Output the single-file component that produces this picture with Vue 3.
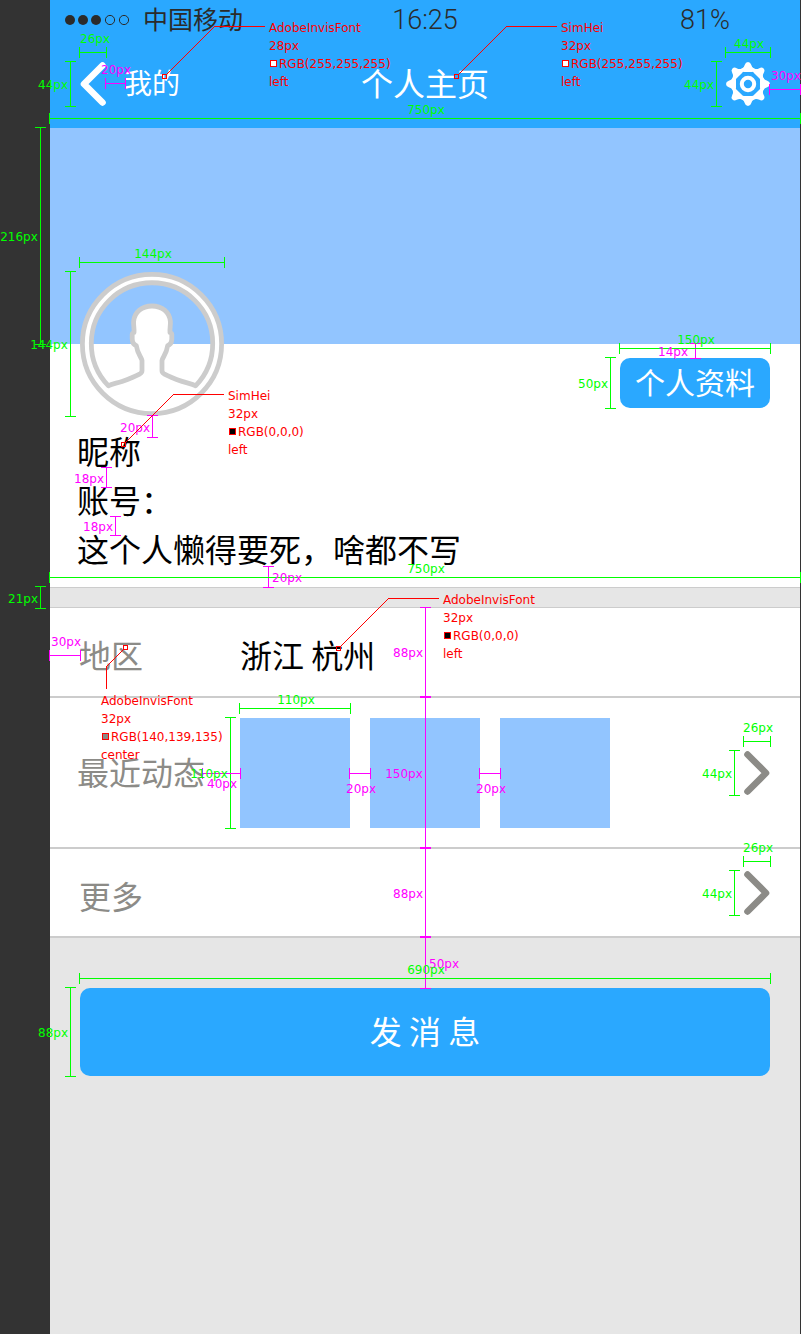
<script setup>
const GREEN = 'green'
const PINK = 'pink'

const photos = [1, 2, 3]
const teeth = [0, 45, 90, 135, 180, 225, 270, 315]

// Horizontal rulers: x1..x2 at height y
const horizontal = [
  { c: GREEN, x1: 79, x2: 106, y: 52 },
  { c: PINK, x1: 105, x2: 125, y: 83 },
  { c: GREEN, x1: 49, x2: 800, y: 118 },
  { c: GREEN, x1: 725, x2: 770, y: 52 },
  { c: PINK, x1: 769, x2: 800, y: 89 },
  { c: GREEN, x1: 79, x2: 224, y: 262 },
  { c: GREEN, x1: 619, x2: 770, y: 348 },
  { c: GREEN, x1: 49, x2: 800, y: 577 },
  { c: PINK, x1: 49, x2: 80, y: 655 },
  { c: PINK, x1: 202, x2: 240, y: 773 },
  { c: GREEN, x1: 239, x2: 350, y: 708 },
  { c: PINK, x1: 349, x2: 370, y: 773 },
  { c: PINK, x1: 479, x2: 500, y: 773 },
  { c: GREEN, x1: 743, x2: 770, y: 741 },
  { c: GREEN, x1: 743, x2: 770, y: 861 },
  { c: GREEN, x1: 79, x2: 770, y: 978 },
]

// Vertical rulers: y1..y2 at position x
const vertical = [
  { c: GREEN, x: 70, y1: 61, y2: 106 },
  { c: GREEN, x: 40, y1: 127, y2: 344 },
  { c: GREEN, x: 716, y1: 61, y2: 106 },
  { c: GREEN, x: 70, y1: 271, y2: 416 },
  { c: PINK, x: 152, y1: 415, y2: 437 },
  { c: PINK, x: 695, y1: 343, y2: 358 },
  { c: GREEN, x: 610, y1: 357, y2: 408 },
  { c: PINK, x: 106, y1: 467, y2: 487 },
  { c: PINK, x: 115, y1: 516, y2: 535 },
  { c: PINK, x: 268, y1: 566, y2: 587 },
  { c: GREEN, x: 40, y1: 586, y2: 608 },
  { c: PINK, x: 425, y1: 607, y2: 697 },
  { c: PINK, x: 425, y1: 696, y2: 848 },
  { c: PINK, x: 425, y1: 847, y2: 937 },
  { c: PINK, x: 425, y1: 936, y2: 988 },
  { c: GREEN, x: 230, y1: 717, y2: 828 },
  { c: GREEN, x: 734, y1: 750, y2: 795 },
  { c: GREEN, x: 734, y1: 870, y2: 915 },
  { c: GREEN, x: 70, y1: 987, y2: 1076 },
]

const labels = [
  { c: GREEN, x: 95, y: 43, t: '26px' },
  { c: PINK, x: 116, y: 74, t: '20px' },
  { c: GREEN, x: 53, y: 89, t: '44px' },
  { c: GREEN, x: 426, y: 114, t: '750px' },
  { c: GREEN, x: 749, y: 48, t: '44px' },
  { c: GREEN, x: 699, y: 89, t: '44px' },
  { c: PINK, x: 786, y: 80, t: '30px' },
  { c: GREEN, x: 19, y: 241, t: '216px' },
  { c: GREEN, x: 153, y: 258, t: '144px' },
  { c: GREEN, x: 49, y: 349, t: '144px' },
  { c: PINK, x: 135, y: 432, t: '20px' },
  { c: GREEN, x: 696, y: 344, t: '150px' },
  { c: PINK, x: 673, y: 356, t: '14px' },
  { c: GREEN, x: 593, y: 388, t: '50px' },
  { c: PINK, x: 89, y: 483, t: '18px' },
  { c: PINK, x: 98, y: 531, t: '18px' },
  { c: PINK, x: 287, y: 582, t: '20px' },
  { c: GREEN, x: 426, y: 573, t: '750px' },
  { c: GREEN, x: 23, y: 603, t: '21px' },
  { c: PINK, x: 408, y: 657, t: '88px' },
  { c: PINK, x: 66, y: 646, t: '30px' },
  { c: GREEN, x: 209, y: 778, t: '110px' },
  { c: PINK, x: 222, y: 788, t: '40px' },
  { c: GREEN, x: 296, y: 704, t: '110px' },
  { c: PINK, x: 404, y: 778, t: '150px' },
  { c: PINK, x: 361, y: 793, t: '20px' },
  { c: PINK, x: 491, y: 793, t: '20px' },
  { c: GREEN, x: 758, y: 732, t: '26px' },
  { c: GREEN, x: 717, y: 778, t: '44px' },
  { c: GREEN, x: 758, y: 852, t: '26px' },
  { c: GREEN, x: 717, y: 898, t: '44px' },
  { c: PINK, x: 408, y: 898, t: '88px' },
  { c: PINK, x: 444, y: 968, t: '50px' },
  { c: GREEN, x: 426, y: 974, t: '690px' },
  { c: GREEN, x: 53, y: 1037, t: '88px' },
]

// Font call-outs: marker position, leader line and the text block
const notes = [
  { mx: 162, my: 74, diag: 'M167 74L215 26', line: 'M215 26.5H265', x: 269, y: 32, font: 'AdobeInvisFont', size: '28px', rgb: '255,255,255', align: 'left' },
  { mx: 454, my: 74, diag: 'M459 74L507 26', line: 'M506 26.5H557', x: 561, y: 32, font: 'SimHei', size: '32px', rgb: '255,255,255', align: 'left' },
  { mx: 121, my: 442, diag: 'M126 442L174 394', line: 'M173 394.5H224', x: 228, y: 400, font: 'SimHei', size: '32px', rgb: '0,0,0', align: 'left' },
  { mx: 336, my: 646, diag: 'M341 646L389 598', line: 'M388 598.5H439', x: 443, y: 604, font: 'AdobeInvisFont', size: '32px', rgb: '0,0,0', align: 'left' },
  { mx: 123, my: 645, diag: 'M124 649L106 667', line: 'M106.5 666V689', x: 101, y: 705, font: 'AdobeInvisFont', size: '32px', rgb: '140,139,135', align: 'center' },
]

const hPath = (d) => `M${d.x1} ${d.y + 0.5}H${d.x2 + 1}M${d.x1 + 0.5} ${d.y - 5}v11M${d.x2 + 0.5} ${d.y - 5}v11`
const vPath = (d) => `M${d.x + 0.5} ${d.y1}V${d.y2 + 1}M${d.x - 5} ${d.y1 + 0.5}h11M${d.x - 5} ${d.y2 + 0.5}h11`
</script>

<template>
  <div class="board">
    <main class="screen">
      <header class="top">
        <div class="status">
          <div class="carrier">
            <svg width="66" height="12" viewBox="0 0 66 12" aria-hidden="true">
              <g fill="#2b2b2b">
                <circle cx="6" cy="6" r="5" />
                <circle cx="19" cy="6" r="5" />
                <circle cx="32" cy="6" r="5" />
              </g>
              <g fill="none" stroke="#2b2b2b">
                <circle cx="46" cy="6" r="4.6" />
                <circle cx="60" cy="6" r="4.6" />
              </g>
            </svg>
            <span class="carrier-name">中国移动</span>
          </div>
          <span class="digits">16:25</span>
          <span class="digits battery">81%</span>
        </div>
        <nav class="nav">
          <a class="back" href="#">
            <svg width="26" height="44" viewBox="0 0 26 44" aria-hidden="true">
              <path d="M22.5 3.5L4 22L22.5 40.5" fill="none" stroke="#fff" stroke-width="6.6" stroke-linecap="round" stroke-linejoin="round" />
            </svg>
            <span class="back-text">我的</span>
          </a>
          <h1 class="title">个人主页</h1>
          <button class="settings" type="button" aria-label="设置">
            <svg width="44" height="44" viewBox="0 0 44 44" aria-hidden="true">
              <path
                v-for="a in teeth"
                :key="a"
                d="M16 6.600Q18.200 5.400 18.800 2.800Q19.600 0 22 0Q24.400 0 25.200 2.800Q25.800 5.400 28 6.600L26 10H18Z"
                :transform="`rotate(${a} 22 22)`"
                fill="#fff"
              />
              <circle cx="22" cy="22" r="14.8" fill="none" stroke="#fff" stroke-width="3.800" />
              <circle cx="22" cy="22" r="6.2" fill="none" stroke="#fff" stroke-width="4" />
            </svg>
          </button>
        </nav>
      </header>

      <div class="cover"></div>

      <section class="profile">
        <div class="profile-head">
          <svg class="avatar" width="144" height="144" viewBox="0 0 144 144" role="img" aria-label="头像">
            <circle cx="72" cy="72" r="65" fill="none" stroke="#fff" stroke-width="8" />
            <circle cx="72" cy="72" r="69.6" fill="none" stroke="#ccc" stroke-width="4.8" />
            <path
              d="M28.5 113.8C32 111.4 36 111.4 42 109.4C50 106.6 56 104 60 101.8Q62 100.6 62 98.5V88.5C61 84.5 57.5 82 56.3 73.5Q52.5 72.5 52.2 67V62.5Q52.2 61 54 60.5C54.3 56 53.4 54 53.6 49.5C54.5 40 62 34 72 34C82 34 89.5 40 90.4 49.5C90.6 54 89.7 56 90 60.5Q91.8 61 91.8 62.5V67Q91.5 72.5 87.7 73.5C86.5 82 83 84.5 82 88.5V98.5Q82 100.6 84 101.8C88 104 94 106.6 102 109.4C108 111.4 112 111.4 115.5 113.8"
              fill="#fff"
            />
            <path
              d="M28.5 113.8A60.7 60.7 0 1 1 115.5 113.8C112 111.4 108 111.4 102 109.4C94 106.6 88 104 84 101.8Q82 100.6 82 98.5V88.5C83 84.5 86.5 82 87.7 73.5Q91.5 72.5 91.8 67V62.5Q91.8 61 90 60.5C89.7 56 90.6 54 90.4 49.5C89.5 40 82 34 72 34C62 34 54.5 40 53.6 49.5C53.4 54 54.3 56 54 60.5Q52.2 61 52.2 62.5V67Q52.5 72.5 56.3 73.5C57.5 82 61 84.5 62 88.5V98.5Q62 100.6 60 101.8C56 104 50 106.6 42 109.4C36 111.4 32 111.4 28.5 113.8Z"
              fill="none"
              stroke="#ccc"
              stroke-width="4.8"
              stroke-linejoin="round"
            />
          </svg>
          <button class="info-button" type="button">个人资料</button>
        </div>
        <div class="bio">
          <p>昵称</p>
          <p>账号：</p>
          <p>这个人懒得要死，啥都不写</p>
        </div>
      </section>

      <section class="list">
        <div class="row low">
          <span class="label">地区</span>
          <span class="value">浙江 杭州</span>
        </div>
        <a class="row" href="#">
          <span class="label">最近动态</span>
          <span class="photos">
            <span v-for="p in photos" :key="p" class="photo"></span>
          </span>
          <svg class="more" width="26" height="44" viewBox="0 0 26 44" aria-hidden="true">
            <path d="M3.5 3.5L22 22L3.5 40.5" />
          </svg>
        </a>
        <a class="row low" href="#">
          <span class="label">更多</span>
          <svg class="more" width="26" height="44" viewBox="0 0 26 44" aria-hidden="true">
            <path d="M3.5 3.5L22 22L3.5 40.5" />
          </svg>
        </a>
      </section>

      <div class="actions">
        <button class="send" type="button">发 消 息</button>
      </div>
    </main>

    <svg class="marks" viewBox="0 0 801 1334">
      <g class="rulers">
        <path v-for="(d, i) in vertical" :key="'v' + i" :class="d.c" :d="vPath(d)" />
        <path v-for="(d, i) in horizontal" :key="'h' + i" :class="d.c" :d="hPath(d)" />
      </g>
      <text v-for="(l, i) in labels" :key="'l' + i" class="measure" :class="l.c" :x="l.x" :y="l.y">{{ l.t }}</text>
      <g v-for="(n, i) in notes" :key="'n' + i" class="note">
        <path :d="n.diag" />
        <path :d="n.line" shape-rendering="crispEdges" />
        <rect :x="n.mx + 0.5" :y="n.my + 0.5" width="4" height="4" />
        <text :x="n.x" :y="n.y">{{ n.font }}</text>
        <text :x="n.x" :y="n.y + 18">{{ n.size }}</text>
        <rect :x="n.x + 1.5" :y="n.y + 28.5" width="6" height="6" :fill="`rgb(${n.rgb})`" />
        <text :x="n.x + 10" :y="n.y + 36">RGB({{ n.rgb }})</text>
        <text :x="n.x" :y="n.y + 54">{{ n.align }}</text>
      </g>
    </svg>
  </div>
</template>

<style>
body {
  margin: 0;
  background: #333;
}
</style>

<style scoped>
.board {
  position: relative;
  box-sizing: border-box;
  min-height: 100vh;
  padding: 0 1px 0 50px;
  display: flex;
  background: #333;
  font-family: "Noto Sans CJK SC", sans-serif;
  font-size: 32px;
}
.screen {
  flex: 1;
  min-width: 0;
  background: #e6e6e6;
}
button {
  border: 0;
  padding: 0;
  font: inherit;
  cursor: pointer;
}
a {
  color: inherit;
  text-decoration: none;
}
svg {
  display: block;
  flex: none;
}
.top {
  background: #2aa8ff;
}
.status {
  display: grid;
  grid-template-columns: 1fr auto 1fr;
  align-items: center;
  height: 40px;
  padding: 0 14px;
  color: #2b2b2b;
}
.carrier {
  display: flex;
  align-items: center;
  gap: 13px;
  font-size: 25px;
  line-height: 36px;
}
.carrier-name,
.back-text,
.title {
  padding-bottom: 4px;
}
.digits {
  font-family: Roboto, "Liberation Sans", sans-serif;
  font-weight: 300;
  font-size: 27px;
  line-height: 40px;
}
.battery {
  justify-self: end;
  padding-right: 56px;
}
.nav {
  display: grid;
  grid-template-columns: 1fr auto 1fr;
  align-items: center;
  height: 88px;
  padding: 0 30px;
  color: #fff;
}
.back {
  display: flex;
  align-items: center;
  gap: 18px;
  font-size: 28px;
  line-height: 40px;
}
.title {
  margin: 0;
  font-size: 32px;
  font-weight: 400;
  line-height: 40px;
}
.settings {
  justify-self: end;
  background: none;
}
.cover {
  height: 216px;
  background: #92c5ff;
}
.profile {
  padding: 0 30px 14px;
  background: #fff;
  border-bottom: 1px solid #ccc;
}
.profile-head {
  display: flex;
  justify-content: space-between;
  align-items: flex-start;
}
.avatar {
  margin-top: -72px;
}
.info-button {
  width: 150px;
  height: 50px;
  margin-top: 14px;
  padding-bottom: 4px;
  border-radius: 10px;
  background: #2aa8ff;
  color: #fff;
  font-size: 30px;
  line-height: 46px;
}
.bio {
  padding-top: 10px;
  margin-left: -3px;
}
.bio p {
  margin: 0;
  line-height: 49px;
  color: #000;
}
.list {
  margin-top: 19px;
  border-top: 1px solid #ccc;
}
.row {
  display: flex;
  align-items: center;
  min-height: 87px;
  padding: 0 30px 0 27px;
  background: #fff;
  border-bottom: 2px solid #ccc;
}
.row:first-child {
  min-height: 88px;
}
.label {
  width: 163px;
  padding-bottom: 4px;
  color: #8c8b87;
  line-height: 40px;
}
.value {
  color: #000;
  line-height: 40px;
}
.low {
  padding-left: 29px;
}
.low .label {
  width: 161px;
}
.low .label,
.low .value {
  padding: 4px 0 0;
}
.photos {
  display: flex;
  gap: 20px;
  padding: 20px 0 19px;
}
.photo {
  width: 110px;
  height: 110px;
  background: #92c5ff;
}
.more {
  margin-left: auto;
  fill: none;
  stroke: #8c8b87;
  stroke-width: 6.6;
  stroke-linecap: round;
  stroke-linejoin: round;
}
.actions {
  padding: 50px 30px;
}
.send {
  width: 100%;
  height: 88px;
  padding-bottom: 4px;
  border-radius: 10px;
  background: #2aa8ff;
  color: #fff;
}
.marks {
  position: absolute;
  top: 0;
  left: 0;
  width: 100%;
  height: auto;
  pointer-events: none;
  font-family: "DejaVu Sans", sans-serif;
  font-size: 12px;
}
.rulers path {
  fill: none;
  stroke-width: 1;
  shape-rendering: crispEdges;
}
.rulers .green {
  stroke: #0f0;
}
.rulers .pink {
  stroke: #f0f;
}
.measure {
  text-anchor: middle;
}
.measure.green {
  fill: #0f0;
}
.measure.pink {
  fill: #f0f;
}
.note path,
.note rect {
  stroke: #f00;
  stroke-width: 1;
}
.note path,
.note rect:not([fill]) {
  fill: none;
}
.note text {
  fill: #f00;
}
</style>
